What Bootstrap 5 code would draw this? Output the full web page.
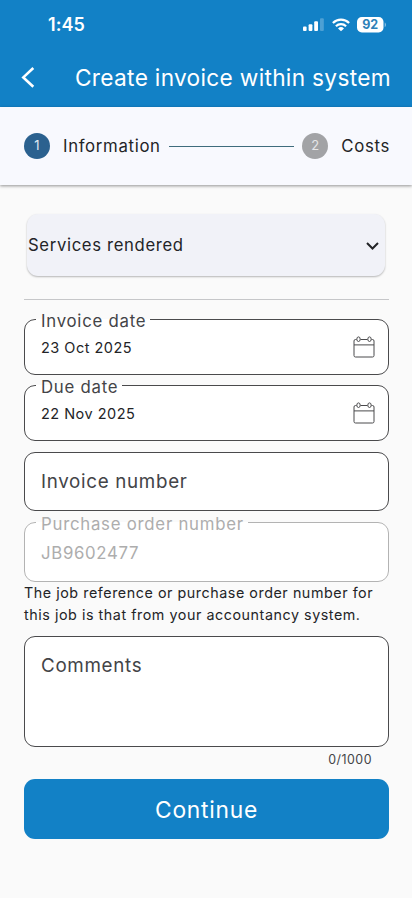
<!DOCTYPE html>
<html lang="en">
<head>
<meta charset="utf-8">
<meta name="viewport" content="width=device-width, initial-scale=1">
<title>Create invoice within system</title>
<link href="https://cdn.jsdelivr.net/npm/bootstrap@5.3.0/dist/css/bootstrap.min.css" rel="stylesheet">
<style>
  body { font-family: Inter, "Liberation Sans", sans-serif; background: #fafafa; color: #232427; height: 898px; overflow: hidden; }
  svg { display: block; flex: none; }
  .app-header { background: #1281c6; height: 107px; }
  .status-row { height: 49px; padding: 0 25px 0 48px; }
  .clock { font-size: 18px; font-weight: 600; letter-spacing: .05px; }
  .wifi-icon { margin: 0 7px; }
  .title-row { height: 58px; padding-left: 20px; }
  .page-title { font-size: 22.7px; font-weight: 400; letter-spacing: .3px; margin-left: 39px; line-height: 30px; white-space: nowrap; }
  .stepper { height: 78px; background: #f8f9fe; padding: 0 22px 0 24px; box-shadow: 0 1px 3px rgba(0,0,0,.42); position: relative; }
  .step-dot { width: 26px; height: 26px; font-size: 13px; background: #2b618f; color: #dfeaf3; flex: none; }
  .step-dot.idle { background: #a2a3a6; color: #e6e6e8; }
  .step-label { font-size: 16.8px; letter-spacing: .66px; padding: 1px 0 0 5px; }
  .step-line { height: 1px; background: #3f6c7d; }
  .page-body { padding: 29px 23px 0 24px; }
  .picker { margin: 0 4px 0 3px; height: 62px; width: 358px; border: 0; border-radius: 11px; background: #f1f2f8; color: inherit; font-size: 16.7px; letter-spacing: .65px; padding: 2px 6px 0 1px; box-shadow: 0 1px 2px rgba(0,0,0,.28); }
  .divider { height: 1px; background: #c6c7c9; margin-top: 23px; margin-bottom: 9px; }
  .outlined { border: 1px solid #4a4a4c; border-radius: 11px; background: #fff; padding: 0 13px 0 16px; }
  fieldset.outlined { padding-left: 11px; }
  .outlined legend { font-size: 16.8px; line-height: 24px; height: 21px; padding: 0 4px 0 5px; letter-spacing: .75px; color: #434447; }
  .date-field { height: 66px; }
  .date-value { font-size: 14.5px; letter-spacing: .48px; padding: 1px 0 0 5px; line-height: 20px; }
  .date-row { height: 34px; }
  .date-row svg { margin-bottom: 1px; }
  .number-field { height: 59px; margin-top: 11px; }
  .prompt { font-size: 18.8px; letter-spacing: .68px; color: #434447; line-height: 25px; }
  .muted-field { height: 70px; margin-top: 1px; border-color: #b3b3b3; }
  .muted-field legend, .muted-field .po-value { color: #adadad; }
  .po-value { font-size: 16.8px; letter-spacing: .68px; padding-left: 5px; line-height: 41px; }
  .hint { font-size: 14.3px; line-height: 21.5px; letter-spacing: .55px; white-space: nowrap; }
  .comments { height: 111px; margin-top: 11px; padding-top: 16px; }
  .counter { font-size: 12.4px; letter-spacing: .5px; line-height: 18px; color: #434447; padding: 4px 17px 0 0; }
  .btn-continue { height: 60px; margin-top: 10px; border: 0; border-radius: 11px; background: #1281c6; color: #fff; font-size: 22.8px; letter-spacing: .75px; padding-top: 3px; }
</style>
</head>
<body>
<header class="app-header text-white">
  <div class="status-row d-flex align-items-center justify-content-between">
    <span class="clock">1:45</span>
    <div class="d-flex align-items-center">
      <svg width="22" height="14" viewBox="0 0 22 14" fill="#fff"><rect x="0" y="8.500" width="3.600" height="4.500" rx="1"/><rect x="5.600" y="6.300" width="3.800" height="6.700" rx="1"/><rect x="11.200" y="3.300" width="3.800" height="9.700" rx="1"/><rect x="17" y=".3" width="3.800" height="12.700" rx="1" opacity=".25"/></svg>
      <svg class="wifi-icon" width="18" height="14" viewBox="0 0 18 14" fill="none" stroke="#fff" stroke-width="2.200"><path d="M.9 5a11.600 11.600 0 0 1 16.200 0"/><path d="M3.900 8.200a7.300 7.300 0 0 1 10.200 0"/><path d="M9 13.300 6 10.400a4.300 4.300 0 0 1 6 0z" fill="#fff" stroke="none"/></svg>
      <svg width="30" height="16" viewBox="0 0 30 16"><rect width="26.500" height="15.500" rx="4.800" fill="#fff"/><path d="M27.700 5.400c1.700.6 1.700 4 0 4.600z" fill="#fff" opacity=".5"/><text x="13.200" y="12.200" text-anchor="middle" font-family="Inter, sans-serif" font-size="12.500" font-weight="700" fill="#2d81b8">92</text></svg>
    </div>
  </div>
  <div class="title-row d-flex align-items-center">
    <svg width="16" height="22" viewBox="0 0 16 22" fill="none" stroke="#fff" stroke-width="2.600"><path d="M13.300 1 3.300 10.400l10 9.400"/></svg>
    <h1 class="page-title mb-0">Create invoice within system</h1>
  </div>
</header>

<nav class="stepper d-flex align-items-center">
  <span class="step-dot rounded-circle d-flex align-items-center justify-content-center">1</span>
  <span class="step-label ms-2">Information</span>
  <span class="step-line flex-grow-1 mx-2"></span>
  <span class="step-dot idle rounded-circle d-flex align-items-center justify-content-center">2</span>
  <span class="step-label ms-2">Costs</span>
</nav>

<main class="page-body">
  <button type="button" class="picker d-flex align-items-center justify-content-between">
    <span>Services rendered</span>
    <svg width="13" height="9" viewBox="0 0 13 9" fill="none" stroke="#232427" stroke-width="2"><path d="m1 1 5.500 5.500L12 1"/></svg>
  </button>
  <div class="divider"></div>

  <fieldset class="outlined date-field">
    <legend class="float-none w-auto mb-0">Invoice date</legend>
    <div class="date-row d-flex align-items-center justify-content-between">
      <span class="date-value">23 Oct 2025</span>
      <svg width="22" height="22" viewBox="0 0 22 22" fill="none" stroke="#4a4a4c"><path d="M3.500 3.500h-1A1.500 1.500 0 0 0 1 5v14.500A1.500 1.500 0 0 0 2.500 21h17a1.500 1.500 0 0 0 1.500-1.500V5a1.500 1.500 0 0 0-1.500-1.500h-1M7.500 3.500h7M1 8.900h20"/><ellipse cx="5.500" cy="3.200" rx="1.700" ry="2.300"/><ellipse cx="16.500" cy="3.200" rx="1.700" ry="2.300"/></svg>
    </div>
  </fieldset>
  <fieldset class="outlined date-field">
    <legend class="float-none w-auto mb-0">Due date</legend>
    <div class="date-row d-flex align-items-center justify-content-between">
      <span class="date-value">22 Nov 2025</span>
      <svg width="22" height="22" viewBox="0 0 22 22" fill="none" stroke="#4a4a4c"><path d="M3.500 3.500h-1A1.500 1.500 0 0 0 1 5v14.500A1.500 1.500 0 0 0 2.500 21h17a1.500 1.500 0 0 0 1.500-1.500V5a1.500 1.500 0 0 0-1.500-1.500h-1M7.500 3.500h7M1 8.900h20"/><ellipse cx="5.500" cy="3.200" rx="1.700" ry="2.300"/><ellipse cx="16.500" cy="3.200" rx="1.700" ry="2.300"/></svg>
    </div>
  </fieldset>
  <div class="outlined number-field d-flex align-items-center"><span class="prompt">Invoice number</span></div>
  <fieldset class="outlined muted-field">
    <legend class="float-none w-auto mb-0">Purchase order number</legend>
    <div class="po-value">JB9602477</div>
  </fieldset>
  <p class="hint mb-0">The job reference or purchase order number for<br>this job is that from your accountancy system.</p>
  <div class="outlined comments"><span class="prompt d-block">Comments</span></div>
  <div class="counter text-end">0/1000</div>
  <button type="button" class="btn-continue w-100 d-flex align-items-center justify-content-center">Continue</button>
</main>
<script src="https://cdn.jsdelivr.net/npm/bootstrap@5.3.0/dist/js/bootstrap.bundle.min.js"></script>
</body>
</html>
